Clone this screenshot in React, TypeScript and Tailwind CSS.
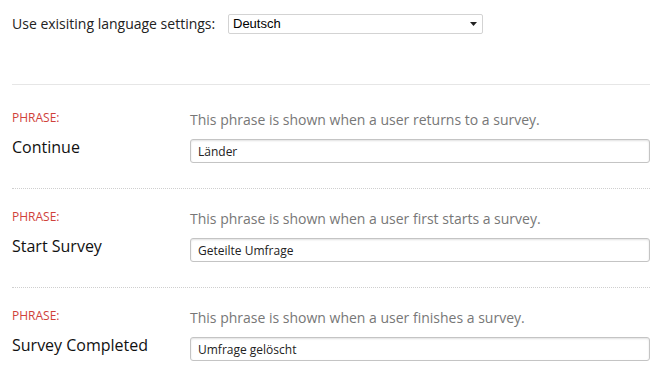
const phrases = [
  {
    label: "Continue",
    hint: "This phrase is shown when a user returns to a survey.",
    value: "Länder",
  },
  {
    label: "Start Survey",
    hint: "This phrase is shown when a user first starts a survey.",
    value: "Geteilte Umfrage",
  },
  {
    label: "Survey Completed",
    hint: "This phrase is shown when a user finishes a survey.",
    value: "Umfrage gelöscht",
  },
];

function PhraseRow({ label, hint, value }: { label: string; hint: string; value: string }) {
  return (
    <div className="pt-[20px] pb-[25px] border-b border-dotted border-[#cfcfcf]">
      <div className="flex items-start">
        <div className="w-[178px] text-[12px] leading-[15px] text-[#d0413a] uppercase">Phrase:</div>
        <div className="flex-1 text-[14px] leading-[20px] text-[#777]">{hint}</div>
      </div>
      <div className="flex items-start mt-[5px]">
        <div className="w-[178px] text-[16px] leading-[24px] text-[#111]">{label}</div>
        <input
          readOnly
          value={value}
          className="mt-[4px] flex-1 h-[24px] px-[7px] text-[12px] text-[#222] bg-white border border-[#c4c4c4] rounded-[3px] shadow-[inset_0_1px_2px_rgba(0,0,0,0.12)] outline-none font-['Open_Sans',sans-serif]"
        />
      </div>
    </div>
  );
}

export default function App() {
  return (
    <div className="min-h-screen bg-white font-['Open_Sans',sans-serif]">
      <div className="ml-[12px] w-[638px]">
        <div className="flex items-center pt-[13px] pb-[50px] border-b border-[#e6e6e6] mb-[5px]">
          <span className="text-[14px] text-[#222] w-[216px]">Use exisiting language settings:</span>
          <div className="w-[255px] h-[20px] flex items-center justify-between pl-[4px] pr-[5px] bg-white border border-[#d3d3d3] rounded-[2px] font-['Liberation_Sans',Arial,sans-serif] text-[13px] text-black">
            <span>Deutsch</span>
            <svg width="7" height="4" viewBox="0 0 7 4">
              <path d="M0 0 H7 L3.5 4 Z" fill="#222" />
            </svg>
          </div>
        </div>
        {phrases.map((p) => (
          <PhraseRow key={p.label} {...p} />
        ))}
      </div>
    </div>
  );
}
